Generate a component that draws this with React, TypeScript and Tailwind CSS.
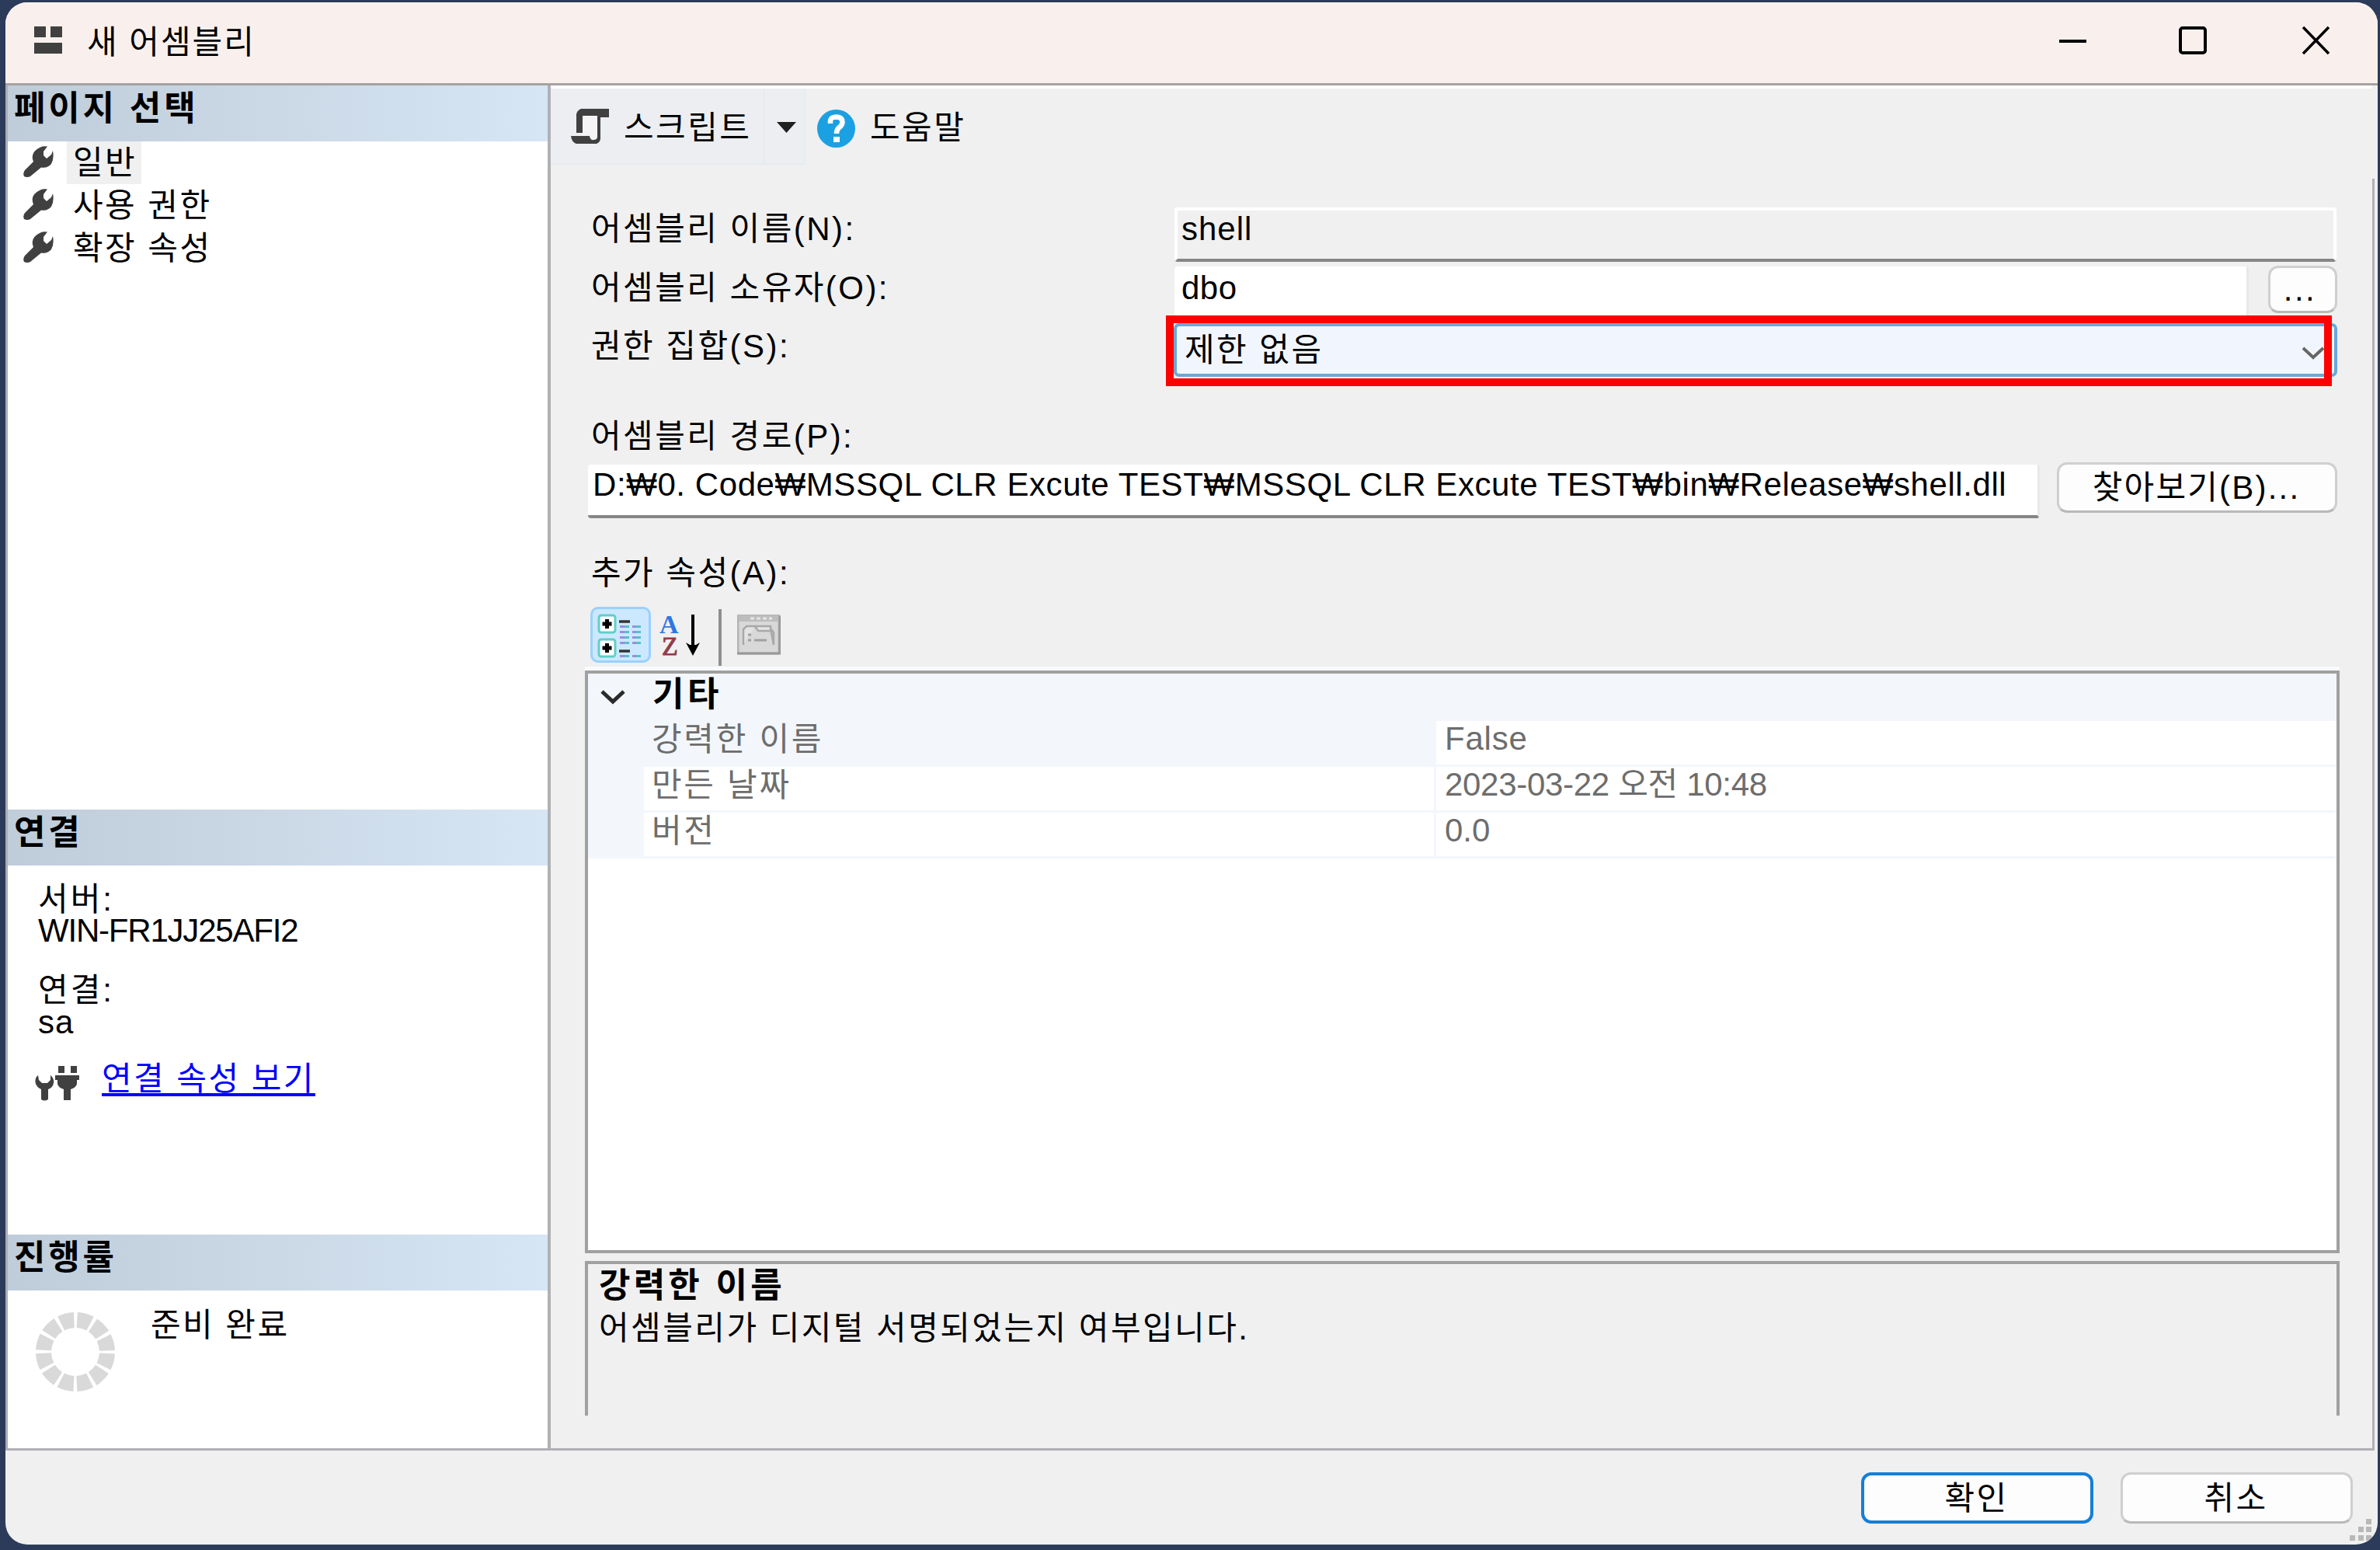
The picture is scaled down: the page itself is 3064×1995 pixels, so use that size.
import { clsx } from "clsx";
import type { ReactNode } from "react";

const pages = [
  { label: "일반", selected: true },
  { label: "사용 권한", selected: false },
  { label: "확장 속성", selected: false },
];

const properties = [
  { name: "강력한 이름", value: "False", selected: true, tracking: "tracking-[0.8px]" },
  { name: "만든 날짜", value: "2023-03-22 오전 10:48", selected: false, tracking: "tracking-[-0.3px]" },
  { name: "버전", value: "0.0", selected: false, tracking: "tracking-[0px]" },
];

function AssemblyIcon() {
  return (
    <svg width="36" height="36" viewBox="0 0 36 36" fill="#404040">
      <rect width="15" height="14" />
      <rect x="21" width="15" height="14" />
      <rect y="21" width="36" height="14" />
    </svg>
  );
}

function WrenchIcon() {
  return (
    <svg width="39" height="40" viewBox="0 0 39 40" fill="#404040">
      <path d="M22 1.5Q26 -0.5 31 0.5L26 7V12L30 16L36 11L38 6Q40 16 36 23Q31 29 23 27.5L9 39Q5 41 1 39Q-1 35 2 31L13 20Q8 8 22 1.5Z" />
    </svg>
  );
}

function ScriptIcon() {
  return (
    <svg width="50" height="46" viewBox="0 0 50 46">
      <path d="M14 9H35V41H26L24 34H14Z" fill="#f4f4f6" />
      <path d="M13 0H49V11H38V9H15V31H7V7Q8 2 13 0Z" fill="#404040" />
      <path d="M34 9H38V38Q38 43 33 45H7Q1 43 0 35H24Q25 41 29 40Q34 40 34 36Z" fill="#404040" />
    </svg>
  );
}

function HelpIcon() {
  return (
    <svg width="49" height="49" viewBox="0 0 49 49">
      <circle cx="24.5" cy="24.5" r="24.5" fill="#1ba1e2" />
      <path d="M17 18V14Q18 9.5 25 9.5Q32.500 10 32.500 16Q32.500 20 28.500 23Q25 25.500 25 31" fill="none" stroke="#fff" strokeWidth="6.500" />
      <rect x="21" y="35" width="8" height="7" fill="#fff" />
    </svg>
  );
}

function PlugIcon() {
  return (
    <svg width="57" height="46" viewBox="0 0 57 46" fill="#404040">
      <path d="M4 13Q-1 17 1 24Q3 29 8 31V44Q12 47 17 44V31Q23 29 24 23Q25 17 20 13V19L16 23H9L5 19Z" />
      <rect x="30" y="1" width="8" height="9" />
      <rect x="46" y="1" width="8" height="9" />
      <path d="M26 13H57V19H54V24Q53 29 46 31V45H37V31Q30 29 29 24V19H26Z" />
    </svg>
  );
}

function Spinner() {
  return (
    <svg width="104" height="104" viewBox="0 0 104 104">
      <circle cx="52" cy="52" r="41" fill="none" stroke="#d9d9d9" strokeWidth="20" strokeDasharray="17.470 4" strokeDashoffset="-2" />
    </svg>
  );
}

function CategorizedIcon() {
  return (
    <svg width="78" height="72" viewBox="0 0 78 72">
      {[11, 42].map((y) => (
        <g key={y}>
          <rect x="11" y={y} width="21" height="22" rx="3" fill="#fff" stroke="#5fcfc8" strokeWidth="3" />
          <path d={`M21.500 ${y + 5}V${y + 17}M15.500 ${y + 11}H27.500`} stroke="#000" strokeWidth="5" />
        </g>
      ))}
      <path d="M37 19H51M37 57H51" stroke="#333" strokeWidth="3.500" />
      {[25.5, 32.5, 39.5, 46.5, 63.5].map((y) => (
        <g key={y} strokeWidth="3">
          <path d={`M38 ${y}H44M54 ${y}H59`} stroke="#9a8ee0" />
          <path d={`M44 ${y}H50M59 ${y}H65`} stroke="#58bfc4" />
        </g>
      ))}
    </svg>
  );
}

function SortIcon() {
  return (
    <div className="flex h-[56px] w-[54px]">
      <div className="flex w-[31px] flex-col font-['Liberation_Serif',serif] text-[34px] leading-[28px] tracking-normal">
        <span className="-ml-px font-bold text-[#2f78e0]">A</span>
        <span className="pl-[2px] text-[#943a4c] [-webkit-text-stroke:1px_#943a4c]">Z</span>
      </div>
      <svg width="22" height="56" viewBox="0 0 22 56">
        <path d="M11 1V44" stroke="#000" strokeWidth="4" />
        <path d="M2 37L11 54L20 37L15 40H7Z" fill="#000" />
      </svg>
    </div>
  );
}

function PropertyPagesIcon() {
  return (
    <svg width="56" height="52" viewBox="0 0 56 52">
      <rect x="1" y="1" width="53" height="49" fill="#d8d8d8" stroke="#b4b4b4" strokeWidth="3" />
      <path d="M2 5H53" stroke="#bdbdbd" strokeWidth="8" />
      <path d="M17 5H45" stroke="#e4e4e4" strokeWidth="3" strokeDasharray="5 3" />
      <path d="M8 39V19L12 15H23L27 21H43V15H23M43 18L47 23V39Z" fill="#e4e4e4" stroke="#a9a9a9" strokeWidth="2.500" />
      <path d="M14 26H18M14 33H18M22 33H38" stroke="#a0a0a0" strokeWidth="3" />
      <path d="M0 50H55V2" fill="none" stroke="#999" strokeWidth="3" />
    </svg>
  );
}

function PanelHeader({ children }: { children: ReactNode }) {
  return (
    <div className="h-[72px] shrink-0 bg-linear-to-r from-[#bfccda] to-[#d7e6f4] pl-[8px] pt-[2px] text-[44px] leading-[55px] font-bold tracking-[3.800px]">{children}</div>
  );
}

function Sidebar() {
  return (
    <div className="flex w-[698px] shrink-0 flex-col border-l-[3px] border-[#adadb2] bg-white">
      <PanelHeader>페이지 선택</PanelHeader>
      <div className="h-[860px]">
        {pages.map((page) => (
          <div key={page.label} className="flex h-[55px] items-start pl-[20px]">
            <div className="pt-[6px]">
              <WrenchIcon />
            </div>
            <span className={clsx("ml-[17px] h-[55px] pl-[8px] pr-[6px]", page.selected && "bg-[#f0f0f0]")}>
              {page.label}
            </span>
          </div>
        ))}
      </div>

      <PanelHeader>연결</PanelHeader>
      <div className="h-[475px] pl-[39px] pt-[16px]">
        <div className="h-[40px] tracking-[3px]">서버:</div>
        <div className="tracking-[-1.2px]">WIN-FR1JJ25AFI2</div>
        <div className="mt-[22px] h-[41px] tracking-[3px]">연결:</div>
        <div className="tracking-[1px]">sa</div>
        <div className="mt-[18px] flex">
          <div className="-ml-[4px] pt-[10px]">
            <PlugIcon />
          </div>
          <a className="ml-[29px] text-[#0000ff] underline decoration-[4px] underline-offset-[4px]">연결 속성 보기</a>
        </div>
      </div>

      <PanelHeader>진행률</PanelHeader>
      <div className="flex flex-1 pl-[35px]">
        <div className="pt-[27px]">
          <Spinner />
        </div>
        <span className="ml-[45px] pt-[17px]">준비 완료</span>
      </div>
    </div>
  );
}

function Toolbar() {
  return (
    <div className="flex h-[102px] border-t-[4px] border-white">
      <div className="flex h-[98px] w-[276px] items-start border-r-2 border-b-2 border-[#e6ebef] bg-[#eceef2] pl-[26px]">
        <div className="pt-[26px]">
          <ScriptIcon />
        </div>
        <span className="ml-[18px] pt-[23px]">스크립트</span>
      </div>
      <div className="h-[98px] w-[52px] border-r-2 border-b-2 border-[#e6ebef] bg-[#eceef2] pl-[15px] pt-[43px]">
        <svg width="25" height="14" viewBox="0 0 25 14">
          <path d="M0 0H25L12.500 14Z" fill="#202020" />
        </svg>
      </div>
      <div className="pl-[15px] pt-[27px]">
        <HelpIcon />
      </div>
      <span className="ml-[19px] pt-[23px]">도움말</span>
    </div>
  );
}

function PropertyGrid() {
  return (
    <div className="h-[750px] border-[4px] border-[#a0a0a0] bg-white">
      <div className="flex h-[61px] bg-[#f3f7fc]">
        <svg className="ml-[16px] mt-[20px]" width="32" height="20" viewBox="0 0 32 20">
          <path d="M2 3L16 16L30 3" fill="none" stroke="#2b2b2b" strokeWidth="5" />
        </svg>
        <span className="-mt-px ml-[35px] text-[44px] leading-[55px] font-bold tracking-[4.500px]">기타</span>
      </div>
      {properties.map((property) => (
        <div key={property.name} className="flex h-[59px] bg-[#f3f7fc] pl-[72px] text-[#6d6d6d]">
          <div className={clsx("h-[56px] w-[1017px] pl-[10px]", !property.selected && "bg-white")}>
            <div className="-mt-[4px] tracking-[2.700px]">{property.name}</div>
          </div>
          <div className="ml-[3px] h-[56px] flex-1 bg-white pl-[11px]">
            <div className={clsx("-mt-[5px]", property.tracking)}>{property.value}</div>
          </div>
        </div>
      ))}
    </div>
  );
}

function GeneralPage() {
  return (
    <div className="flex w-[2345px] flex-col">
      <Toolbar />
      <div className="pl-[48px] pt-[55px]">
        <div className="flex h-[70px]">
          <div className="w-[755px] pl-[4px]">어셈블리 이름(N):</div>
          <div className="w-[1496px] rounded-[4px] border-[4px] border-white border-b-[#868686] bg-[#f0f0f0] pl-[5px] tracking-[1px]">
            <div className="-mt-[4px]">shell</div>
          </div>
        </div>
        <div className="mt-[6px] flex h-[67px]">
          <div className="w-[755px] pl-[4px]">어셈블리 소유자(O):</div>
          <div className="w-[1383px] rounded-[4px] border-r-[3px] border-[#e8e8e8] bg-white pl-[9px] tracking-[0.500px]">
            dbo
          </div>
          <button className="-mt-px ml-[25px] h-[61px] w-[89px] rounded-[13px] border-[3px] border-[#cfcfcf] border-b-[#b9b9b9] bg-[#fdfdfd] pr-[7px] leading-[50px]">...</button>
        </div>
        <div className="mt-[6px] flex h-[69px]">
          <div className="w-[754px] pl-[4px] pt-[2px]">권한 집합(S):</div>
          <div className="relative flex w-[1498px] rounded-[7px] border-[4px] border-[#6ba8d6] bg-[#f1f6fe] pl-[10px]">
            <span className="flex-1 pt-[3px]">제한 없음</span>
            <svg className="mr-[13px] mt-[26px]" width="28" height="18" viewBox="0 0 28 18">
              <path d="M1 2L14 14L27 2" fill="none" stroke="#666" strokeWidth="4" />
            </svg>
            {/* highlight drawn over the permission set */}
            <div className="absolute -left-[14px] -top-[14px] h-[91px] w-[1501px] border-[10px] border-[#ff0000]" />
          </div>
        </div>

        <div className="mt-[49px] pl-[4px]">어셈블리 경로(P):</div>
        <div className="mt-[9px] flex h-[69px]">
          <div className="w-[1869px] rounded-[4px] border-r-[3px] border-b-[4px] border-[#e8e8e8] border-b-[#868686] bg-white pl-[6px] tracking-[0.580px]">
            <div className="-mt-[2px]">
              D:₩0. Code₩MSSQL CLR Excute TEST₩MSSQL CLR Excute TEST₩bin₩Release₩shell.dll
            </div>
          </div>
          <button className="-mt-[3px] ml-[22px] h-[65px] w-[361px] rounded-[13px] border-[3px] border-[#cfcfcf] border-b-[#b9b9b9] bg-[#fdfdfd] pr-[2px] tracking-[2.200px]">찾아보기(B)...</button>
        </div>
        <div className="mt-[43px] pl-[4px]">추가 속성(A):</div>
      </div>

      <div className="w-[2303px] pl-[44px]">
        <div className="mt-[16px] flex h-[77px] pl-[7px]">
          <div className="h-[72px] w-[78px] rounded-[10px] bg-[#cce8ff] shadow-[inset_0_0_0_3px_#99d1ff]">
            <CategorizedIcon />
          </div>
          <div className="ml-[12px] pt-[9px]">
            <SortIcon />
          </div>
          <div className="ml-[21px] mt-[3px] h-[73px] w-[4px] bg-[#8f8f8f]" />
          <div className="ml-[20px] pt-[10px]">
            <PropertyPagesIcon />
          </div>
        </div>
        <div className="h-[5px] bg-[#f9fbff]" />
        <PropertyGrid />
        <div className="mt-[10px] h-[199px] border-x-[4px] border-t-[4px] border-[#a0a0a0] pl-[14px]">
          <div className="text-[44px] leading-[55px] font-bold tracking-[4.200px]">강력한 이름</div>
          <div>어셈블리가 디지털 서명되었는지 여부입니다.</div>
        </div>
      </div>
    </div>
  );
}

function SizeGrip() {
  return (
    <svg width="30" height="30" viewBox="0 0 30 30" fill="#b8b8b8">
      <rect x="21" y="0" width="7" height="7" />
      <rect x="11" y="10" width="7" height="7" />
      <rect x="21" y="10" width="7" height="7" />
      <rect x="0" y="21" width="7" height="7" />
      <rect x="11" y="21" width="7" height="7" />
      <rect x="21" y="21" width="7" height="7" />
    </svg>
  );
}

export default function App() {
  return (
    <div className="h-[1995px] w-[3064px] overflow-hidden bg-[#2c3b59] pl-[7px] pt-[3px] font-['Liberation_Sans','Noto_Sans_CJK_KR',sans-serif] text-[42px] leading-[55px] tracking-[2.460px] whitespace-nowrap text-black">
      <div className="flex h-[1985px] w-[3054px] flex-col overflow-hidden rounded-[28px] bg-[#f0f0f0]">
        <div className="flex h-[107px] shrink-0 border-b-[3px] border-[#a6a2a1] bg-[#f9f0ed] pl-[37px]">
          <div className="pt-[31px]">
            <AssemblyIcon />
          </div>
          <span className="ml-[32px] flex-1 pt-[24px] tracking-[2px]">새 어셈블리</span>
          <svg className="mr-[59px] mt-[30px]" width="352" height="38" viewBox="0 0 352 38" fill="none" stroke="#000">
            <path d="M1 20H36" strokeWidth="4" />
            <rect x="157" y="3" width="32" height="32" rx="3" strokeWidth="4" />
            <path d="M315 2L348 36M348 2L315 36" strokeWidth="3.500" />
          </svg>
        </div>

        <div className="flex h-[1754px] shrink-0">
          <Sidebar />
          <div className="flex flex-1 border-l-[4px] border-[#b0b0b5]">
            <GeneralPage />
            <div className="mt-[120px] flex-1 border-l-[3px] border-[#b0b0b5]" />
          </div>
        </div>

        <div className="mr-[4px] h-[3px] shrink-0 bg-[#b0b0b5]" />
        <div className="flex flex-1 justify-end pt-[28px]">
          <button className="h-[66px] w-[299px] rounded-[13px] border-[4px] border-[#157fd6] bg-[#fdfdfd] pr-[2px]">확인</button>
          <button className="ml-[35px] h-[66px] w-[299px] rounded-[13px] border-[3px] border-[#cfcfcf] border-b-[#b9b9b9] bg-[#fdfdfd] pr-[2px]">취소</button>
          <div className="-ml-[4px] mr-[6px] mt-[60px]">
            <SizeGrip />
          </div>
        </div>
      </div>
    </div>
  );
}
